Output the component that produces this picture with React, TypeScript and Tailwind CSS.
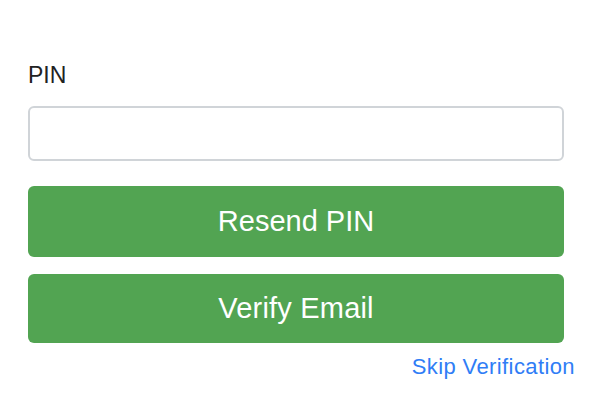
export default function App() {
  return (
    <div
      className="w-[596px] h-[420px] bg-white pl-[28px] pr-[32px] pt-[61px]"
      style={{ fontFamily: '"Liberation Sans", Arial, sans-serif' }}
    >
      <label className="block text-[23px] leading-[28px] text-[#222] mb-[17px]">PIN</label>
      <input
        type="text"
        className="block w-full h-[55px] rounded-[6px] border-2 border-[#d0d4d8] bg-white px-3 text-[22px] outline-none"
      />
      <button className="mt-[25px] w-full h-[71px] rounded-[6px] bg-[#52a452] text-white text-[29px]">
        Resend PIN
      </button>
      <button className="mt-[17px] w-full h-[69px] rounded-[6px] bg-[#52a452] text-white text-[29px] tracking-[0.2px]">
        Verify Email
      </button>
      <div className="flex justify-end mt-[11px] mr-[-11px]">
        <a href="#" className="text-[22px] leading-[26px] tracking-[0.4px] text-[#2f7df6]">
          Skip Verification
        </a>
      </div>
    </div>
  );
}
